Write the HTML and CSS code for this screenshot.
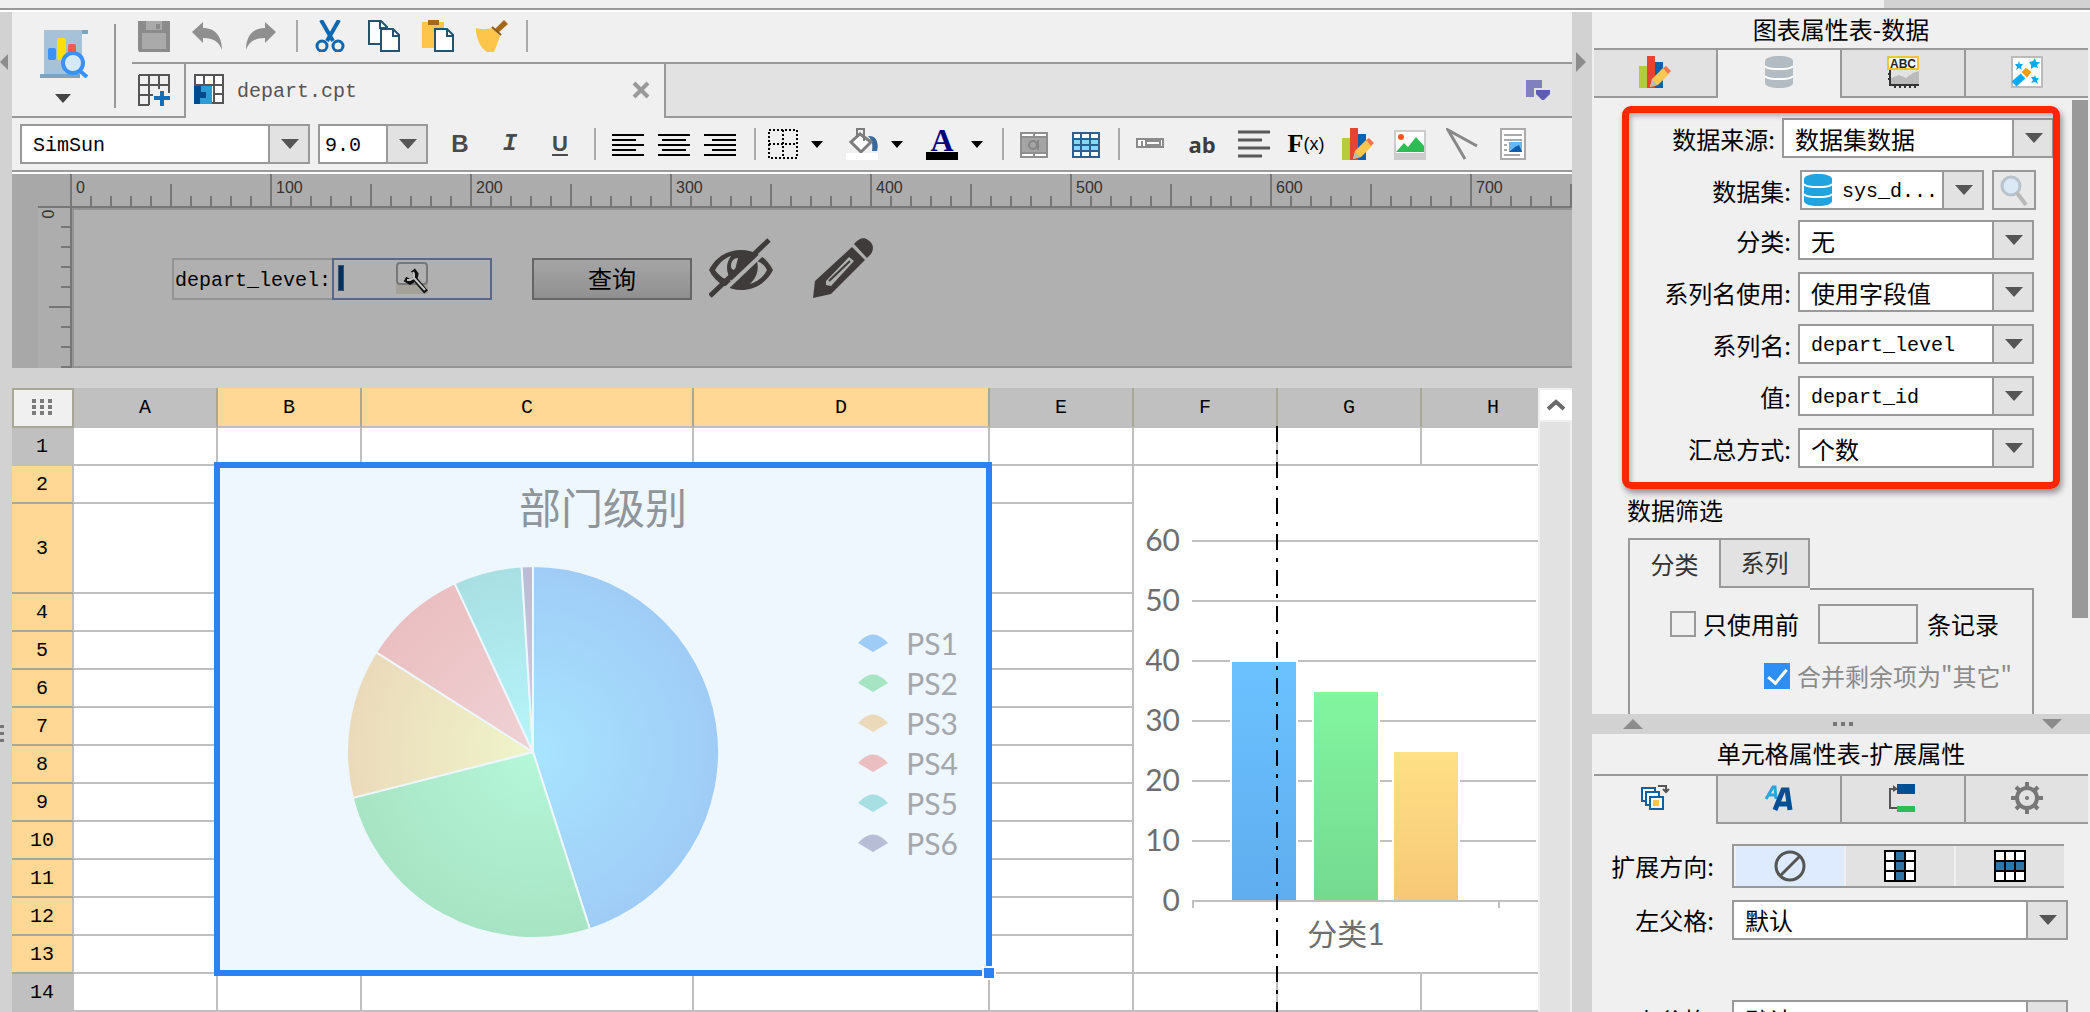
FILE: index.html
```html
<!DOCTYPE html>
<html lang="zh-CN">
<head>
<meta charset="utf-8">
<title>depart.cpt</title>
<link rel="stylesheet" href="styles.css">
</head>
<body>
<svg class="defs" aria-hidden="true">
  <symbol id="i-chart" viewBox="0 0 32 32">
    <path d="M0 10h8v22H0z" fill="#b5cc3f"/><path d="M8 0h8v32H8z" fill="#e8432f"/><path d="M16 6h8v26h-8z" fill="#0a62ae"/>
    <path d="M11 31l2-8 11-11 6 6-11 11z" fill="#fbc750"/><path d="M24 12l3-2 5 5-3 3z" fill="#f4764f"/><path d="M11 31l2-7 5 5z" fill="#b9b9b9"/>
  </symbol>
  <symbol id="i-db" viewBox="0 0 28 32">
    <path d="M0 5c0-3 6-5 14-5s14 2 14 5v22c0 3-6 5-14 5S0 30 0 27z" fill="currentColor"/>
    <path d="M0 10c3 4 25 4 28 0M0 20c3 4 25 4 28 0" fill="none" stroke="#fff" stroke-width="2"/>
  </symbol>
</svg>

<div class="topstrip"><div class="topstrip-end"></div></div>
<div class="app">
  <div class="edge edge-left">
    <svg class="edge-arrow" viewBox="0 0 10 20"><path d="M10 0v20L0 10z" fill="#8c8c8c"/></svg>
    <svg class="edge-dots" viewBox="0 0 5 20"><path d="M0 1h4v3H0zM0 8h4v3H0zM0 15h4v3H0z" fill="#777"/></svg>
  </div>

  <main class="main">
    <header class="head">
      <button class="preview" aria-label="预览">
        <svg width="48" height="48" viewBox="0 0 48 48"><path d="M4 0h44v4h-6v40H4z" fill="#a6c2d8"/><path d="M42 0h6v4h-6z" fill="#7da3bf"/><path d="M0 44h40v4H0z" fill="#7da3bf"/><rect x="8" y="18" width="8" height="12" rx="2" fill="#3a91f7"/><rect x="17" y="8" width="9" height="22" rx="2" fill="#fbe000"/><rect x="28" y="14" width="8" height="14" rx="2" fill="#e9604f"/><circle cx="33" cy="33" r="10" fill="#d5e9f8" stroke="#3a91f7" stroke-width="4"/><path d="M40 41l7 6" stroke="#3a91f7" stroke-width="4"/></svg>
        <span class="tri"></span>
      </button>
      <div class="head-right">
        <div class="quick">
          <button class="ib" aria-label="保存"><svg viewBox="0 0 32 32"><path d="M0 1h32v31H1L0 30z" fill="#8b8b8b"/><path d="M4 13h24v16H4zM8 1h16v9H8z" fill="#aaa"/><path d="M18 4h4v5h-4z" fill="#8b8b8b"/></svg></button>
          <button class="ib" aria-label="撤销"><svg viewBox="0 0 32 32"><path d="M0 12L11 2v6c13 0 19 9 19 22-3-8-8-12-19-12v5z" fill="#8f8f8f"/></svg></button>
          <button class="ib" aria-label="重做"><svg viewBox="0 0 32 32"><path d="M30 12L19 2v6C6 8 0 17 0 30c3-8 8-12 19-12v5z" fill="#8f8f8f"/></svg></button>
          <i class="sep"></i>
          <button class="ib" aria-label="剪切"><svg viewBox="0 0 32 32" fill="none" stroke="#0d68b1"><path d="M7 0l12 21M25 0L13 21" stroke-width="4"/><ellipse cx="8" cy="26" rx="5" ry="5" stroke-width="3"/><ellipse cx="24" cy="26" rx="5" ry="5" stroke-width="3"/></svg></button>
          <button class="ib" aria-label="复制"><svg viewBox="0 0 32 32" fill="#fff" stroke="#23536f" stroke-width="2"><path d="M1 1h12l6 6v17H1z"/><path d="M12 1v7h7" fill="none"/><path d="M13 9h12l6 6v16H13z"/><path d="M25 9v7h6" fill="none"/></svg></button>
          <button class="ib" aria-label="粘贴"><svg viewBox="0 0 32 32"><path d="M0 2h22v26H0z" fill="#fdc549"/><path d="M6 0h11v5H6z" fill="#a5681a"/><path d="M13 9h12l6 6v16H13z" fill="#fff" stroke="#23536f" stroke-width="2"/><path d="M25 9v7h6" fill="none" stroke="#23536f" stroke-width="2"/></svg></button>
          <button class="ib" aria-label="格式刷"><svg viewBox="0 0 32 32"><path d="M28 0l4 4-10 9-4-3z" fill="#a5681a"/><path d="M0 8c7 2 12 1 16 0l8 8c-2 6-4 11-6 16h-7C5 28 0 20 0 8z" fill="#fdc549"/><path d="M16 7l9 8" stroke="#8a5a1b" stroke-width="2"/></svg></button>
          <i class="sep"></i>
        </div>
        <nav class="tabs">
          <button class="newtab" aria-label="新建"><svg class="i32" viewBox="0 0 32 32"><path d="M1 1h30v18M1 1v30h10M1 11h30M1 21h14M11 1v30M21 1v14" fill="none" stroke="#555" stroke-width="2"/><path d="M24 17v15M16 24h16" stroke="#0d70bd" stroke-width="4"/></svg></button>
          <div class="doctab">
            <svg class="i32" viewBox="0 0 32 32"><path d="M1 1h28v28H1z" fill="#fff" stroke="#555" stroke-width="2"/><path d="M10 1v10M20 1v28M1 11h28M20 20h9" stroke="#555" stroke-width="2"/><path d="M0 12h18v18H0z" fill="#2b9cd4"/><path d="M0 12h7v6h5v6H6v6H0z" fill="#034a8c"/></svg>
            <a class="docname" href="#">depart.cpt</a>
            <button class="close" aria-label="关闭"><svg width="18" height="18" viewBox="0 0 18 18"><path d="M2 2l14 14M16 2L2 16" stroke="#999" stroke-width="4"/></svg></button>
          </div>
          <div class="tabfill"><svg width="26" height="22" viewBox="0 0 26 22"><path d="M0 1h16v8h-8v9H0z" fill="#8080c0"/><path d="M10 11h14v4l-6 6h-2l-6-6z" fill="#5c5cb0"/></svg></div>
        </nav>
      </div>
    </header>

    <div class="format">
      <span class="sel sel-font"><select class="mono" aria-label="字体"><option>SimSun</option></select></span>
      <span class="sel sel-size"><select class="mono" aria-label="字号"><option>9.0</option></select></span>
      <div class="grp letters">
        <button class="ib b">B</button><button class="ib it">I</button><button class="ib u">U</button>
      </div>
      <i class="sep"></i>
      <div class="grp aligns">
        <button class="ib" aria-label="左对齐"><svg viewBox="0 0 32 32"><path d="M0 7h32M0 12h24M0 17h32M0 22h24M0 27h32" stroke="#000" stroke-width="2"/></svg></button>
        <button class="ib" aria-label="居中"><svg viewBox="0 0 32 32"><path d="M0 7h32M4 12h24M0 17h32M4 22h24M0 27h32" stroke="#000" stroke-width="2"/></svg></button>
        <button class="ib" aria-label="右对齐"><svg viewBox="0 0 32 32"><path d="M0 7h32M8 12h24M0 17h32M8 22h24M0 27h32" stroke="#000" stroke-width="2"/></svg></button>
      </div>
      <i class="sep"></i>
      <div class="grp drops">
        <button class="drop" aria-label="边框"><svg class="i32" viewBox="0 0 32 32"><path d="M3 2h28v28H3zM3 16h28M17 2v28" fill="none" stroke="#000" stroke-width="2" stroke-dasharray="2 2"/></svg><span class="tri s"></span></button>
        <button class="drop" aria-label="背景色"><svg class="i32" viewBox="0 0 32 32"><path d="M22 8c9-1 11 8 9 15h-5c1-7 0-11-4-15z" fill="#38699b"/><path d="M14 6L25 14 15 24 5 14z" fill="#fff" stroke="#7c7c7c" stroke-width="3"/><path d="M11 9V1h7v12" fill="none" stroke="#7c7c7c" stroke-width="2"/><path d="M0 25h32v7H0z" fill="#fff"/></svg><span class="tri s"></span></button>
        <button class="drop" aria-label="字体颜色"><span class="acolor">A</span><span class="tri s"></span></button>
      </div>
      <i class="sep"></i>
      <div class="grp wide">
        <button class="ib" aria-label="合并单元格"><svg viewBox="0 0 32 32"><path d="M2 4h28v26H2z" fill="#8f8f8f"/><path d="M4 6h11v2H4zM17 6h11v2H17zM4 26h11v2H4zM17 26h11v2H17z" fill="#fff"/><path d="M4 10h24v14H4z" fill="#a5a5a5"/><circle cx="15" cy="17" r="4" fill="none" stroke="#858585" stroke-width="2"/><path d="M20 12v10" stroke="#858585" stroke-width="2"/></svg></button>
        <button class="ib" aria-label="取消合并"><svg viewBox="0 0 32 32"><path d="M3 5h26v24H3z" fill="#fff"/><path d="M3 11h26v12H3z" fill="#84d8fb"/><path d="M3 5h26v24H3zM3 11h26M3 17h26M3 23h26M11 5v24M20 5v24" fill="none" stroke="#2d5f90" stroke-width="2"/></svg></button>
      </div>
      <i class="sep"></i>
      <div class="grp wide">
        <button class="ib" aria-label="控件"><svg viewBox="0 0 32 32"><path d="M3 11h26v8H3z" fill="#fff" stroke="#8a8a8a" stroke-width="2"/><path d="M8 13v5M12 13h14v4H12z" fill="none" stroke="#8a8a8a" stroke-width="2"/></svg></button>
        <button class="ib ab">ab</button>
        <button class="ib" aria-label="富文本"><svg viewBox="0 0 32 32"><path d="M0 4h32M0 12h24M0 20h32M0 28h24" stroke="#5b5858" stroke-width="3"/></svg></button>
        <button class="ib fx">F<span>(x)</span></button>
        <button class="ib" aria-label="图表"><svg><use href="#i-chart"/></svg></button>
        <button class="ib" aria-label="图片"><svg viewBox="0 0 32 32"><path d="M1 3h30v28H1z" fill="#fff" stroke="#ccc" stroke-width="2"/><path d="M1 25h30v6H1z" fill="#ccc"/><path d="M2 24l8-9 4 4 8-10 8 9v6z" fill="#2dbd54"/><circle cx="7" cy="9" r="3" fill="#ea5b1b"/></svg></button>
        <button class="ib" aria-label="斜线"><svg viewBox="0 0 32 32"><path d="M19 31L2 2l29 16" fill="none" stroke="#888" stroke-width="3"/></svg></button>
        <button class="ib" aria-label="报表块"><svg viewBox="0 0 32 32"><path d="M3 1h24v30H3z" fill="#fff" stroke="#aaa" stroke-width="2"/><path d="M6 7h18M6 12h18M6 17h3M6 22h3M6 27h16" stroke="#aaa" stroke-width="2"/><path d="M11 14h13v10H11z" fill="#64b9f5"/><path d="M11 24l6-5 4-2 3 7z" fill="#0b5fae"/></svg></button>
      </div>
    </div>

    <section class="params">
      <div class="ruler-corner"></div>
      <div class="ruler-x"><span>0</span><span>100</span><span>200</span><span>300</span><span>400</span><span>500</span><span>600</span><span>700</span></div>
      <div class="ruler-y"><span>0</span></div>
      <div class="canvas">
        <label class="plabel" for="level">depart_level:</label>
        <div class="pinput"><i class="pcursor"></i><input id="level" type="text">
          <svg class="i32" viewBox="0 0 32 32"><path d="M0 22h32v10H0z" fill="#a3a198"/><rect x="1" y="1" width="30" height="21" rx="3" fill="#b0b0b0" stroke="#777" stroke-width="2"/><path d="M19 17l11 13M9 17l5 3 5-3 1-5-3-4" fill="none" stroke="#111" stroke-width="5"/><path d="M18 16l11 12M11 18l3 0 4-2 0-4-1-2" fill="none" stroke="#c4c4c4" stroke-width="2"/></svg></div>
        <button class="query">查询</button>
        <svg class="eye" viewBox="0 0 64 60"><path d="M0 32C7 18 20 12 32 12s25 6 32 20C57 46 44 52 32 52S7 46 0 32z" fill="#3f3b3b"/><path d="M6 32c5-8 10-12 16-14-6 9-5 17 1 25C16 42 10 38 6 32zM58 32c-4 8-10 12-17 14 7-7 9-14 7-23 5 2 8 5 10 9zM22 28c0-5 3-8 7-8l-3 12c-3 0-4-2-4-4z" fill="#b0b0b0"/><path d="M6 61L65 5" stroke="#b0b0b0" stroke-width="4"/><path d="M1 58L60 2" stroke="#3f3b3b" stroke-width="5"/></svg>
        <svg class="pencil" viewBox="0 0 62 60"><path d="M0 60l2-17L39 9l13 13-34 34z" fill="#3f3b3b"/><path d="M41 6c5-6 10-7 14-4 6 4 6 9 3 14l-4 4z" fill="#3f3b3b"/><path d="M13 43l23-24 5 4-23 25-5-1z" fill="#b0b0b0"/><path d="M16 43l21-20" stroke="#3f3b3b" stroke-width="2"/></svg>
      </div>
    </section>

    <section class="sheet">
      <table class="cells">
        <colgroup><col class="c-n"><col class="c-s"><col class="c-s"><col class="c-c"><col class="c-d"><col class="c-s"><col class="c-s"><col class="c-s"><col></colgroup>
        <thead><tr><th class="corner"><svg width="22" height="16" viewBox="0 0 22 16"><path d="M0 0h4v4H0zM8 0h4v4H8zM16 0h4v4h-4zM0 6h4v4H0zM8 6h4v4H8zM16 6h4v4h-4zM0 12h4v4H0zM8 12h4v4H8zM16 12h4v4h-4z" fill="#7b7b7b"/></svg></th><th>A</th><th class="on">B</th><th class="on">C</th><th class="on">D</th><th>E</th><th>F</th><th>G</th><th>H</th></tr></thead>
        <tbody>
          <tr><th>1</th><td></td><td></td><td></td><td></td><td></td><td></td><td></td><td class="last"></td></tr>
          <tr><th class="on">2</th><td></td>
            <td class="merged" colspan="3" rowspan="12">
              <figure class="pie">
                <figcaption>部门级别</figcaption>
                <div class="pie-body">
                  <svg width="372" height="372" viewBox="129 100 372 372" stroke="#eef6fe" stroke-width="2" stroke-linejoin="bevel">
                    <defs>
                      <radialGradient id="g1" gradientUnits="userSpaceOnUse" cx="315" cy="286" r="186"><stop offset="0" stop-color="#a8e4ff"/><stop offset="1" stop-color="#9fccf6"/></radialGradient>
                      <radialGradient id="g2" gradientUnits="userSpaceOnUse" cx="315" cy="286" r="186"><stop offset="0" stop-color="#b5f7d9"/><stop offset="1" stop-color="#a7e4c4"/></radialGradient>
                      <radialGradient id="g3" gradientUnits="userSpaceOnUse" cx="315" cy="286" r="186"><stop offset="0" stop-color="#eff5ca"/><stop offset="1" stop-color="#ebdaba"/></radialGradient>
                      <radialGradient id="g4" gradientUnits="userSpaceOnUse" cx="315" cy="286" r="186"><stop offset="0" stop-color="#efd2d5"/><stop offset="1" stop-color="#ebbfc1"/></radialGradient>
                      <radialGradient id="g5" gradientUnits="userSpaceOnUse" cx="315" cy="286" r="186"><stop offset="0" stop-color="#b6f6fb"/><stop offset="1" stop-color="#a8dfe3"/></radialGradient>
                      <radialGradient id="g6" gradientUnits="userSpaceOnUse" cx="315" cy="286" r="186"><stop offset="0" stop-color="#c8cfea"/><stop offset="1" stop-color="#b6bdd4"/></radialGradient>
                    </defs>
                    <path fill="url(#g1)" d="M315 286V100A186 186 0 0 1 371.9 463.1z"/>
                    <path fill="url(#g2)" d="M315 286L371.9 463.1A186 186 0 0 1 134.8 331.9z"/>
                    <path fill="url(#g3)" d="M315 286L134.8 331.9A186 186 0 0 1 158.1 186.1z"/>
                    <path fill="url(#g4)" d="M315 286L158.1 186.1A186 186 0 0 1 236.7 117.3z"/>
                    <path fill="url(#g5)" d="M315 286L236.7 117.3A186 186 0 0 1 303.6 100.4z"/>
                    <path fill="url(#g6)" d="M315 286L303.6 100.4A186 186 0 0 1 315 100z"/>
                  </svg>
                  <ul class="legend">
                    <li><svg viewBox="0 0 30 18"><path d="M0 9Q15-8 30 9L15 18z" fill="#9fccf6"/></svg>PS1</li>
                    <li><svg viewBox="0 0 30 18"><path d="M0 9Q15-8 30 9L15 18z" fill="#a7e4c4"/></svg>PS2</li>
                    <li><svg viewBox="0 0 30 18"><path d="M0 9Q15-8 30 9L15 18z" fill="#ebdaba"/></svg>PS3</li>
                    <li><svg viewBox="0 0 30 18"><path d="M0 9Q15-8 30 9L15 18z" fill="#ebbfc1"/></svg>PS4</li>
                    <li><svg viewBox="0 0 30 18"><path d="M0 9Q15-8 30 9L15 18z" fill="#a8dfe3"/></svg>PS5</li>
                    <li><svg viewBox="0 0 30 18"><path d="M0 9Q15-8 30 9L15 18z" fill="#b6bdd4"/></svg>PS6</li>
                  </ul>
                </div>
              </figure>
              <div class="selection"></div><div class="handle"></div>
            </td>
            <td></td>
            <td class="barcell" colspan="3" rowspan="12">
              <svg class="bars" width="404" height="506" viewBox="0 0 404 506">
                <defs>
                  <linearGradient id="b1" x2="0" y2="1"><stop offset="0" stop-color="#6bc2ff"/><stop offset="1" stop-color="#5fadee"/></linearGradient>
                  <linearGradient id="b2" x2="0" y2="1"><stop offset="0" stop-color="#82f59f"/><stop offset="1" stop-color="#74da90"/></linearGradient>
                  <linearGradient id="b3" x2="0" y2="1"><stop offset="0" stop-color="#ffe086"/><stop offset="1" stop-color="#f7c877"/></linearGradient>
                </defs>
                <path d="M58 75h346M58 135h344M58 195h344M58 255h344M58 315h344M58 375h344M58 435h346M59 435v7M365 435v7" fill="none" stroke="#c0c0c0" stroke-width="2"/>
                <g stroke="#fff" stroke-width="4" paint-order="stroke"><path d="M98 196h64v238H98z" fill="url(#b1)"/><path d="M180 226h64v208h-64z" fill="url(#b2)"/><path d="M260 286h64v148h-64z" fill="url(#b3)"/></g>
                <path d="M58 435h346" stroke="#c0c0c0" stroke-width="2"/>
                <g text-anchor="end"><text x="46" y="85">60</text><text x="46" y="145">50</text><text x="46" y="205">40</text><text x="46" y="265">30</text><text x="46" y="325">20</text><text x="46" y="385">10</text><text x="46" y="445">0</text></g>
                <text x="212" y="479" text-anchor="middle">分类1</text>
              </svg>
            </td></tr>
          <tr class="tall"><th class="on">3</th><td></td><td></td></tr>
          <tr><th class="on">4</th><td></td><td></td></tr>
          <tr><th class="on">5</th><td></td><td></td></tr>
          <tr><th class="on">6</th><td></td><td></td></tr>
          <tr><th class="on">7</th><td></td><td></td></tr>
          <tr><th class="on">8</th><td></td><td></td></tr>
          <tr><th class="on">9</th><td></td><td></td></tr>
          <tr><th class="on">10</th><td></td><td></td></tr>
          <tr><th class="on">11</th><td></td><td></td></tr>
          <tr><th class="on">12</th><td></td><td></td></tr>
          <tr><th class="on">13</th><td></td><td></td></tr>
          <tr><th>14</th><td></td><td></td><td></td><td></td><td></td><td></td><td></td><td class="last"></td></tr>
        </tbody>
      </table>
      <div class="pageline"></div>
      <div class="vscroll"><button aria-label="向上滚动"><svg width="18" height="12" viewBox="0 0 18 12"><path d="M1 10l8-7 8 7" fill="none" stroke="#6a6a6a" stroke-width="4"/></svg></button></div>
    </section>
  </main>

  <div class="edge edge-mid"><svg class="edge-arrow" viewBox="0 0 10 20"><path d="M0 0v20l10-10z" fill="#8c8c8c"/></svg></div>

  <aside class="side">
    <section class="upper">
      <h2>图表属性表-数据</h2>
      <nav class="ptabs">
        <button aria-label="类型"><svg class="i32"><use href="#i-chart"/></svg></button>
        <button class="active" aria-label="数据"><svg class="dbi grey"><use href="#i-db"/></svg></button>
        <button aria-label="样式"><svg class="i32" viewBox="0 0 32 32"><path d="M1 1h30v12H1z" fill="#fff" stroke="#fbc32e" stroke-width="2"/><text class="abc" x="16" y="12" text-anchor="middle">ABC</text><path d="M4 29V22l8-3 7 3 7-5 6-2v14z" fill="#bbb"/><path d="M3 14v15h29M1 18h2M1 23h2M8 29v3M13 29v3M18 29v3M23 29v3M28 29v3" fill="none" stroke="#333" stroke-width="2"/></svg></button>
        <button aria-label="特效"><svg class="i32" viewBox="0 0 32 32"><path d="M1 1h30v30H1z" fill="#fff" stroke="#bbb" stroke-width="2"/><path d="M3 28l9-8" stroke="#0aa9f4" stroke-width="7"/><path d="M12 16l3-3 4 3-3 4z" fill="#f59b14" stroke="#f59b14" stroke-width="2"/><path d="M8 5l1 3h3l-2 3 1 3-3-2-3 2 1-3-2-3h3zM24 2l1 4h4l-3 3 1 3-4-1-3 2v-4l-2-3 4-1zM24 19l1 3h3l-2 3 1 3-3-2-4 1 2-3-2-3h3z" fill="#0aa9f4"/></svg></button>
      </nav>
      <div class="upper-body">
        <div class="props">
          <div class="redbox"></div>
          <div class="row first"><label for="src">数据来源:</label><span class="sel w272"><select id="src"><option>数据集数据</option></select></span></div>
          <div class="row"><label for="ds">数据集:</label><span class="sel w184 hasdb"><svg class="dbi blue"><use href="#i-db"/></svg><select class="mono" id="ds"><option>sys_d...</option></select></span><button class="find" aria-label="预览数据"><svg class="i32" viewBox="0 0 32 32"><circle cx="13" cy="12" r="9" fill="#dbe8f6" stroke="#b9c3cc" stroke-width="3"/><path d="M19 19l9 12" stroke="#b9b9b9" stroke-width="4"/></svg></button></div>
          <div class="row near"><label for="cat">分类:</label><span class="sel w236"><select id="cat"><option>无</option></select></span></div>
          <div class="row"><label for="su">系列名使用:</label><span class="sel w236"><select id="su"><option>使用字段值</option></select></span></div>
          <div class="row"><label for="sn">系列名:</label><span class="sel w236"><select class="mono" id="sn"><option>depart_level</option></select></span></div>
          <div class="row"><label for="val">值:</label><span class="sel w236"><select class="mono" id="val"><option>depart_id</option></select></span></div>
          <div class="row"><label for="agg">汇总方式:</label><span class="sel w236"><select id="agg"><option>个数</option></select></span></div>
          <h3>数据筛选</h3>
          <div class="ftabs"><button class="active">分类</button><button>系列</button><i></i></div>
          <div class="fbody">
            <div class="frow"><input type="checkbox" id="only"><label for="only">只使用前</label><input class="num" type="text" aria-label="记录数"><span>条记录</span></div>
            <div class="frow second"><input type="checkbox" id="mergeo" checked><label for="mergeo">合并剩余项为"其它"</label></div>
          </div>
        </div>
        <div class="pscroll"><i></i></div>
      </div>
    </section>
    <div class="split"><svg width="20" height="10" viewBox="0 0 20 10"><path d="M0 10h20L10 0z" fill="#8c8c8c"/></svg><svg width="20" height="4" viewBox="0 0 20 4"><path d="M0 0h4v4H0zM8 0h4v4H8zM16 0h4v4h-4z" fill="#777"/></svg><svg width="20" height="10" viewBox="0 0 20 10"><path d="M0 0h20L10 10z" fill="#8c8c8c"/></svg></div>
    <section class="lower">
      <h2>单元格属性表-扩展属性</h2>
      <nav class="ptabs">
        <button class="active" aria-label="扩展"><svg class="i32" viewBox="0 0 32 32"><g fill="#fff" stroke="#0c61a6" stroke-width="2"><path d="M3 6h13v13H3z"/><path d="M7 10h13v13H7z"/><path d="M11 15h13v12H11z"/></g><path d="M14 18h6v6h-6z" fill="#fdc549"/><path d="M19 4h8v6M24 7l3 3 3-3" fill="none" stroke="#555" stroke-width="2"/></svg></button>
        <button aria-label="样式"><svg class="i32" viewBox="0 0 32 32" fill="none"><path d="M3 17L10 5h2l1 12M5 13h8" stroke="#2ba6dd" stroke-width="3"/><path d="M12 28L20 8h4l3 20M15 22h11" stroke="#034f94" stroke-width="5"/></svg></button>
        <button aria-label="条件"><svg class="i32" viewBox="0 0 32 32"><path d="M10 7H3v19h8" fill="none" stroke="#555" stroke-width="2"/><path d="M6 3l5 4-5 3z" fill="#555"/><path d="M10 2h18v10H10z" fill="#034f94"/><path d="M10 24h18v6H10z" fill="#2dbd54"/></svg></button>
        <button aria-label="设置"><svg class="i32" viewBox="0 0 32 32" fill="none" stroke="#777"><circle cx="16" cy="16" r="10" stroke-width="4"/><path d="M16 0v5M16 27v5M0 16h5M27 16h5M5 5l4 4M23 23l4 4M27 5l-4 4M9 23l-4 4" stroke-width="4"/><circle cx="16" cy="16" r="2" fill="#777" stroke="none"/></svg></button>
      </nav>
      <div class="lrow"><span class="llabel">扩展方向:</span>
        <div class="seg">
          <button class="active" aria-label="不扩展"><svg class="i32" viewBox="0 0 32 32"><circle cx="16" cy="16" r="14" fill="none" stroke="#555" stroke-width="3"/><path d="M6 26L26 6" stroke="#555" stroke-width="3"/></svg></button>
          <button aria-label="纵向"><svg class="i32" viewBox="0 0 32 32"><path d="M1 1h30v30H1z" fill="#fff"/><path d="M11 1h10v30H11z" fill="#2f75a6"/><path d="M1 1h30v30H1zM1 11h30M1 21h30M11 1v30M21 1v30" fill="none" stroke="#000" stroke-width="2"/></svg></button>
          <button aria-label="横向"><svg class="i32" viewBox="0 0 32 32"><path d="M1 1h30v30H1z" fill="#fff"/><path d="M1 11h30v10H1z" fill="#2f75a6"/><path d="M1 1h30v30H1zM1 11h30M1 21h30M11 1v30M21 1v30" fill="none" stroke="#000" stroke-width="2"/></svg></button>
        </div></div>
      <div class="lrow"><label class="llabel" for="lp">左父格:</label><span class="sel w336"><select id="lp"><option>默认</option></select></span></div>
      <div class="lrow far"><label class="llabel" for="tp">上父格:</label><span class="sel w336"><select id="tp"><option>默认</option></select></span></div>
    </section>
  </aside>
</div>
</body>
</html>
```
FILE: styles.css
```css
*{box-sizing:border-box}
body{margin:0;height:100vh;display:flex;flex-direction:column;overflow:hidden;background:#f0f0f0;color:#000;font:24px/28px "Noto Sans CJK SC","Noto Sans",sans-serif}
button,input,select{font:inherit;color:inherit;margin:0;padding:0;border:0;border-radius:0;background:none}
h2,h3,figure,ul{margin:0;padding:0;font-weight:400;font-size:24px}
svg{display:block;flex:none}
.defs{width:0;height:0;position:absolute}
.i32{width:32px;height:32px}
.mono{font-family:"Liberation Mono",monospace;font-size:20px}

.topstrip{flex:none;height:12px;border-bottom:2px solid #fff;box-shadow:inset 0 -2px #999;display:flex;justify-content:flex-end;padding-bottom:2px}
.topstrip-end{width:206px;background:#d2d2d2}
.app{flex:1;min-height:0;display:flex}
.edge{flex:none;background:#d2d2d2;display:flex;flex-direction:column;align-items:flex-start;padding-top:40px}
.edge-left{width:12px}
.edge-mid{width:20px;padding-left:4px}
.edge-arrow{width:10px;height:20px}
.edge-left .edge-arrow{width:8px}
.edge-dots{width:5px;height:20px;margin-top:652px}
.main{flex:1;min-width:0;display:flex;flex-direction:column}

/* toolbars */
.head{flex:none;display:flex}
.preview{width:120px;border-bottom:2px solid #999;padding:18px 0 0 28px;display:flex;flex-direction:column;align-items:flex-start;gap:16px;background:linear-gradient(#999,#999) 102px 12px/2px 84px no-repeat}
.tri{width:0;height:0;border:solid transparent;border-width:9px 8px 0;border-top-color:#444}
.tri.s{border-width:7px 6px 0;border-top-color:#000}
.preview .tri{margin-left:15px}
.head-right{flex:1;min-width:0}
.quick{height:50px;display:flex;align-items:center;gap:22px;padding:0 0 2px 6px}
.ib{flex:none;width:32px;height:32px;display:flex;align-items:center;justify-content:center}
.ib svg{width:32px;height:32px}
.sep{flex:none;width:2px;height:32px;background:#aaa}
.quick .sep{margin:0 -6px 0 -4px}
.tabs{display:flex;height:56px;border-top:2px solid #999}
.newtab{width:52px;padding-left:6px;border-bottom:2px solid #999}
.doctab{width:482px;border:solid #999;border-width:0 2px;display:flex;align-items:center;padding:0 14px 2px 8px}
.docname{margin:4px 0 0 11px;flex:1;font:20px/24px "Liberation Mono",monospace;color:#555;text-decoration:none}
.tabfill{flex:1;background:#e2e2e2;border-bottom:2px solid #999;display:flex;justify-content:flex-end;align-items:center;padding-right:20px}
.format{flex:none;height:56px;border-bottom:2px solid #fff;box-shadow:inset 0 -2px #999;display:flex;align-items:center;padding:0 0 2px 8px}
.grp{display:flex;align-items:center}
.format .sep{margin:0 16px 0 18px}
.letters{gap:18px;margin-left:16px;color:#4a4a4a}
.ib.b{font:700 24px/28px "Liberation Sans",sans-serif}
.ib.it{font:italic 700 24px/28px "Liberation Mono",monospace}
.ib.u{font:700 22px/24px "Liberation Sans",sans-serif;text-decoration:underline;text-underline-offset:3px}
.aligns{gap:14px}
.aligns+.sep{margin-right:10px}
.drops{gap:22px}
.drop{display:flex;align-items:center;gap:13px;width:58px}
.acolor{width:32px;height:32px;border-bottom:8px solid #000;font:700 32px/24px "Liberation Serif",serif;color:#00007d;text-align:center}
.wide{gap:20px}
.wide+.sep{margin:0 14px 0 16px}
.drops+.sep{margin-right:14px}
.ab{font:700 22px/28px "Open Sans",sans-serif;color:#3c3c3c}
.fx{font:700 26px/28px "Liberation Serif",serif}
.fx span{font:18px/28px "Liberation Sans",sans-serif}

/* drop-down: the arrow box shares the grid cell of the select */
.sel{flex:none;display:grid;height:40px;border:2px solid #999;background:#fff}
.sel>*,.sel::before,.sel::after{grid-area:1/1}
.sel select{appearance:none;width:100%;height:36px;padding:2px 44px 0 11px;outline:0}
.sel select.mono{padding-top:4px}
.sel::before{content:"";justify-self:end;width:38px;height:36px;background:#e2e2e2;border-left:2px solid #999;pointer-events:none;z-index:1}
.sel::after{content:"";justify-self:end;align-self:center;margin-right:9px;border:solid transparent;border-width:10px 9px 0;border-top-color:#555;pointer-events:none;z-index:2}
.sel-font{width:290px;margin-right:8px}
.sel-size{width:110px}
.sel-size select{padding-left:5px}
.w184{width:184px}.w236{width:236px}.w272{width:272px}.w336{width:336px}

/* parameter pane */
.params{flex:none;display:grid;grid-template-columns:60px 1fr;grid-template-rows:34px 160px;font-family:"Liberation Sans",sans-serif}
.ruler-corner{background:linear-gradient(#777,#777) 26px 100%/34px 2px no-repeat #a8a8a8}
.ruler-x{overflow:hidden;display:flex;margin-left:-2px;border-bottom:2px solid #777;background:repeating-linear-gradient(90deg,#777 0 2px,transparent 2px 20px) 0 100%/100% 10px no-repeat,repeating-linear-gradient(90deg,#777 0 2px,transparent 2px 100px) 0 100%/100% 22px no-repeat,repeating-linear-gradient(90deg,#777 0 2px,transparent 2px 200px) #acacac}
.ruler-x span{flex:none;width:200px;padding-left:6px;font-size:16px;line-height:28px;color:#333}
.ruler-y{border-left:26px solid #a8a8a8;border-right:2px solid #777;background:repeating-linear-gradient(transparent 0 18px,#777 18px 20px) 100% 0/9px 100% no-repeat,repeating-linear-gradient(transparent 0 98px,#777 98px 100px) 100% 0/21px 100% no-repeat #adadad}
.ruler-y span{display:block;width:22px;height:12px;font-size:16px;line-height:12px;text-align:center;transform:rotate(-90deg);color:#333}
.canvas{background:#b0b0b0;border:solid #949494;border-width:2px 0 2px 2px;padding:48px 0 0 98px;display:flex;align-items:flex-start;overflow:hidden}
.plabel{flex:none;width:160px;height:42px;border:2px solid #939393;border-right:0;padding-left:1px;font:20px/42px "Liberation Mono",monospace}
.pinput{flex:none;width:160px;height:42px;border:2px solid #57698a;display:flex;align-items:center;padding:0 62px 2px 4px}
.pinput input{flex:1;min-width:0;height:30px}
.pcursor{width:6px;height:26px;background:#00305e;border:1px solid #39506e}
.query{flex:none;width:160px;height:42px;margin:0 17px 0 40px;border:2px solid #666;background:linear-gradient(#a5a5a5,#909090);font:24px/36px "Noto Sans CJK SC",sans-serif;padding-bottom:2px}
.eye{width:64px;height:60px;margin:-20px 40px 0 0}
.pencil{width:62px;height:60px;margin-top:-20px}

/* spreadsheet */
.sheet{flex:1;min-height:0;position:relative;display:flex;border-top:20px solid #d2d2d2;overflow:hidden;background:#fff}
.cells{flex:1;min-width:0;table-layout:fixed;border-collapse:separate;border-spacing:0;font:20px/24px "Liberation Mono",monospace;align-self:flex-start;width:100%}
.c-n{width:62px}.c-s{width:144px}.c-c{width:332px}.c-d{width:296px}
.cells tr{height:38px}
.cells thead tr{height:40px}
.cells .tall{height:90px}
.cells th,.cells td{padding:0;border:solid #bfbfbf;border-width:0 2px 2px 0}
.cells th{background:#c0c0c0;font-weight:400;padding-top:2px}
.cells thead th{border-right-color:#a9a795}
.cells th.on{background:#fed894}
.cells tbody th.on{border-bottom-color:#a9a795}
.cells .corner{background:#f0f0f0;border:2px solid #a9a795}
.corner svg{margin:0 auto 4px}
.cells thead th:last-child,.cells .last,.cells .barcell{border-right:0}
.cells thead th:last-child{padding-left:26px}
.cells .merged{position:relative;background:#eef6fe;vertical-align:top}
.selection{position:absolute;inset:-4px;border:6px solid #2d82f2}
.handle{position:absolute;right:-8px;bottom:-8px;width:14px;height:14px;border:2px solid #fff;background:#2d82f2}
.pie figcaption{font:42px/80px "Noto Sans CJK SC",sans-serif;color:#8e959b;text-align:center}
.pie-body{display:flex;justify-content:space-between;padding:20px 30px 0 129px;height:424px}
.legend{list-style:none;margin-top:57px;font:30px/40px Lato,sans-serif;color:#a3a8ad}
.legend li{display:flex;align-items:center;gap:18px}
.legend svg{width:30px;height:18px}
.cells .barcell{vertical-align:top}
.bars{font:30px Lato,"Noto Sans CJK SC",sans-serif;fill:#6e6e6e}
.pageline{position:absolute;left:1264px;top:38px;bottom:0;width:2px;background:repeating-linear-gradient(#000 0 16px,transparent 16px 24px,#000 24px 28px,transparent 28px 36px)}
.vscroll{flex:none;width:34px;background:#e2e2e2;border:2px solid #f0f0f0;border-bottom:0}
.vscroll button{width:32px;height:32px;background:#fff;border-bottom:2px solid #f0f0f0;display:flex;align-items:center;justify-content:center}

/* property panels */
.side{flex:none;width:498px;display:flex;flex-direction:column}
.side h2{text-align:center;height:36px;line-height:34px}
.ptabs{display:flex;margin:0 2px;border-top:2px solid #999;height:50px}
.ptabs button{flex:1;display:flex;align-items:center;justify-content:center;background:#e2e2e2;border:solid #999;border-width:0 2px 2px 0;padding-bottom:2px}
.ptabs button:last-child{border-right:0}
.ptabs .active{background:none;border-bottom:0;padding-bottom:4px}
.dbi{width:28px;height:32px}
.grey{color:#b3bbc3}.blue{color:#20a4e0}
.abc{font:700 12px "Liberation Sans",sans-serif;fill:#222}
.upper{flex:none;height:702px;overflow:hidden}
.upper-body{display:flex;height:616px}
.props{flex:1;min-width:0;position:relative;padding-top:20px}
.redbox{position:absolute;left:30px;top:8px;width:438px;height:383px;border:7px solid #ff2600;border-radius:9px;box-shadow:2px 4px 6px #0006,inset 2px 3px 5px #0004;pointer-events:none;z-index:3}
.row{display:flex;align-items:center;margin-bottom:12px}
.row label{width:206px;padding:2px 7px 0 0;text-align:right}
.row.first label{width:190px}
.row .hasdb{margin-left:2px}
.row.near{margin-top:-2px}
.hasdb svg{margin:2px}
.hasdb .dbi{z-index:1}
.hasdb select{padding-left:40px;background:none}
.find{width:44px;height:40px;margin-left:8px;border:2px solid #999;background:#e8e8e8;display:flex;align-items:center;justify-content:center}
.side h3{margin:28px 0 0 35px;line-height:28px}
.ftabs{display:flex;margin:14px 0 0 36px;width:406px;height:52px}
.ftabs button{width:91px;height:50px;border:2px solid #999;background:#e2e2e2;color:#333;padding-bottom:2px}
.ftabs .active{background:none;height:52px;border-right:0;border-bottom:0}
.ftabs i{flex:1;border-bottom:2px solid #999}
.fbody{width:406px;height:200px;margin-left:36px;border:solid #999;border-width:0 2px;padding:14px 0 0 40px}
.frow{display:flex;align-items:center;height:40px}
.frow label{padding-left:7px;line-height:32px}
.frow input[type=checkbox]{appearance:none;width:26px;height:26px;border:2px solid #999}
.frow input:checked{border:0;background:#2d8ff5;display:grid;place-items:center}
.frow input:checked::after{content:"";width:8px;height:16px;border:solid #fff;border-width:0 3px 3px 0;transform:rotate(40deg);margin-bottom:4px}
.num{width:100px;height:40px;margin:0 9px 0 19px;border:2px solid #999}
.second{margin:12px 0 0 94px;color:#8a8a8a;white-space:nowrap}
.pscroll{width:18px;padding-top:2px}
.pscroll i{display:block;width:16px;height:518px;background:#999}
.split{flex:none;height:20px;background:#d2d2d2;display:flex;align-items:center;justify-content:space-between;padding:0 28px 0 31px}
.lower{flex:1;min-height:0;overflow:hidden}
.lower h2{height:40px;line-height:38px}
.lrow{display:flex;align-items:center;margin-top:12px}
.ptabs+.lrow{margin-top:20px}
.lrow.far{margin-top:60px}
.llabel{width:140px;padding-right:18px;text-align:right}
.seg{display:flex;gap:2px;width:332px;height:44px;border:2px solid #999;border-right:0;padding-left:2px}
.seg button{flex:1;background:#e2e2e2;display:flex;align-items:center;justify-content:center}
.seg .active{background:#deeafd}
.lower .sel select{padding-top:0}
```
